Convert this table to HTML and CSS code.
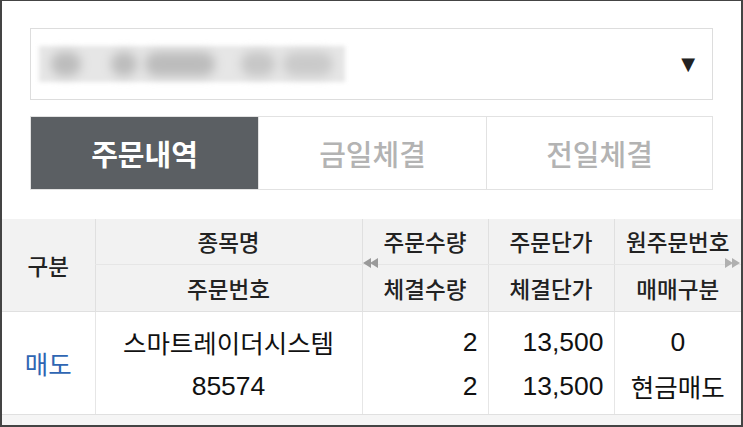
FILE: index.html
```html
<!DOCTYPE html>
<html lang="ko">
<head>
<meta charset="utf-8">
<link rel="stylesheet" href="styles.css">
</head>
<body>
<div class="frame">
  <div class="top">
    <div class="select">
      <div class="blurred">
        <span class="blob b1"></span><span class="blob b2"></span><span class="blob b3"></span><span class="blob b4"></span><span class="blob b5"></span>
      </div>
      <span class="caret">▼</span>
    </div>
    <div class="tabs">
      <div class="tab active">주문내역</div>
      <div class="tab">금일체결</div>
      <div class="tab">전일체결</div>
    </div>
  </div>
  <div class="table-wrap">
    <table class="grid">
      <colgroup>
        <col class="c1"><col class="c2"><col class="c3"><col class="c4"><col class="c5">
      </colgroup>
      <thead>
        <tr class="h1">
          <th rowspan="2" class="first">구분</th>
          <th>종목명</th>
          <th>주문수량</th>
          <th>주문단가</th>
          <th>원주문번호</th>
        </tr>
        <tr class="h2">
          <th>주문번호</th>
          <th>체결수량</th>
          <th>체결단가</th>
          <th>매매구분</th>
        </tr>
      </thead>
      <tbody>
        <tr>
          <td class="first side">매도</td>
          <td class="center"><div class="l1">스마트레이더시스템</div><div class="l2 num">85574</div></td>
          <td class="num-cell"><div class="l1 num">2</div><div class="l2 num">2</div></td>
          <td class="num-cell"><div class="l1 num">13,500</div><div class="l2 num">13,500</div></td>
          <td class="center"><div class="l1 num">0</div><div class="l2">현금매도</div></td>
        </tr>
      </tbody>
    </table>
    <svg class="arrow arrow-prev" width="16" height="10" viewBox="0 0 16 10"><path d="M0 5L8 0V10Z M7 5L15 0V10Z" fill="#9a9a9a"/></svg>
    <svg class="arrow arrow-next" width="16" height="10" viewBox="0 0 16 10"><path d="M0 0L8 5L0 10Z M7 0L15 5L7 10Z" fill="#b0b0b0"/></svg>
  </div>
  <div class="foot"></div>
</div>
</body>
</html>
```
FILE: styles.css
```css
* { box-sizing: border-box; }
html, body { margin: 0; padding: 0; background: #fff; }
body { font-family: "Liberation Sans", "Noto Sans CJK KR", sans-serif; color: #222; }

.frame {
  width: 743px;
  height: 427px;
  border: 2px solid #444;
  border-top-width: 1px;
  display: flex;
  flex-direction: column;
  overflow: hidden;
}

.top { padding: 27px 28px 0; }

.select {
  height: 72px;
  border: 1px solid #ddd;
  display: flex;
  align-items: center;
  justify-content: space-between;
  padding: 0 17px 0 8px;
}
.blurred {
  width: 306px;
  height: 36px;
  background: #e6e6e6;
  display: flex;
  align-items: center;
  padding-left: 12px;
  gap: 8px;
  filter: blur(2px);
}
.blob { display: block; height: 24px; background: #bcbcbc; border-radius: 12px; filter: blur(5px); }
.b1 { width: 30px; }
.b2 { width: 26px; margin-left: 22px; }
.b3 { width: 70px; }
.b4 { width: 34px; margin-left: 18px; background: #c6c6c6; }
.b5 { width: 50px; background: #cacaca; }
.caret { font-family: "DejaVu Sans", sans-serif; font-size: 18px; color: #222; line-height: 1; }

.tabs {
  margin-top: 16px;
  height: 74px;
  display: grid;
  grid-template-columns: 227px 228px 1fr;
  border: 1px solid #e2e2e2;
}
.tab {
  display: flex;
  align-items: center;
  justify-content: center;
  font-family: "Noto Sans CJK KR", sans-serif;
  font-size: 29px;
  font-weight: 500;
  color: #b3b3b3;
}
.tab + .tab { border-left: 1px solid #e2e2e2; }
.tab.active { background: #5b5f63; color: #fff; font-weight: 700; }

.table-wrap { position: relative; margin-top: 29px; width: 739px; }

.grid {
  width: 739px;
  border-collapse: collapse;
  table-layout: fixed;
}
.c1 { width: 93px; }
.c2 { width: 267px; }
.c3 { width: 126px; }
.c4 { width: 126px; }
.c5 { width: 127px; }

.grid th {
  background: #f2f2f2;
  font-family: "Noto Sans CJK KR", sans-serif;
  font-weight: 500;
  font-size: 22.5px;
  color: #222;
  border-left: 1px solid #e0e0e0;
  padding: 0;
  text-align: center;
}
.grid th.first, .grid td.first { border-left: none; }
.h1 th { height: 45px; border-bottom: 1px solid #e6e6e6; }
.h1 th.first { border-bottom: none; }
.h2 th { height: 47px; }

.grid td {
  border-left: 1px solid #e6e6e6;
  border-top: 1px solid #e0e0e0;
  border-bottom: 1px solid #e0e0e0;
  height: 103px;
  padding: 0;
  font-family: "Noto Sans CJK KR", sans-serif;
  font-size: 25.5px;
  color: #111;
  vertical-align: top;
}
.grid td.side {
  color: #2f66b3;
  text-align: center;
  vertical-align: middle;
}
.grid td.center { text-align: center; }
.grid td.num-cell { text-align: right; padding-right: 10px; }
.l1 { height: 44px; line-height: 44px; margin-top: 8px; }
.l2 { height: 44px; line-height: 44px; }
.num { font-family: "Liberation Sans", sans-serif; font-size: 26.5px; }

.arrow { position: absolute; top: 39px; display: block; z-index: 2; }
.arrow-prev { left: 361px; }
.arrow-next { right: 0; }

.foot { flex: 1; background: #f5f5f5; }
```
